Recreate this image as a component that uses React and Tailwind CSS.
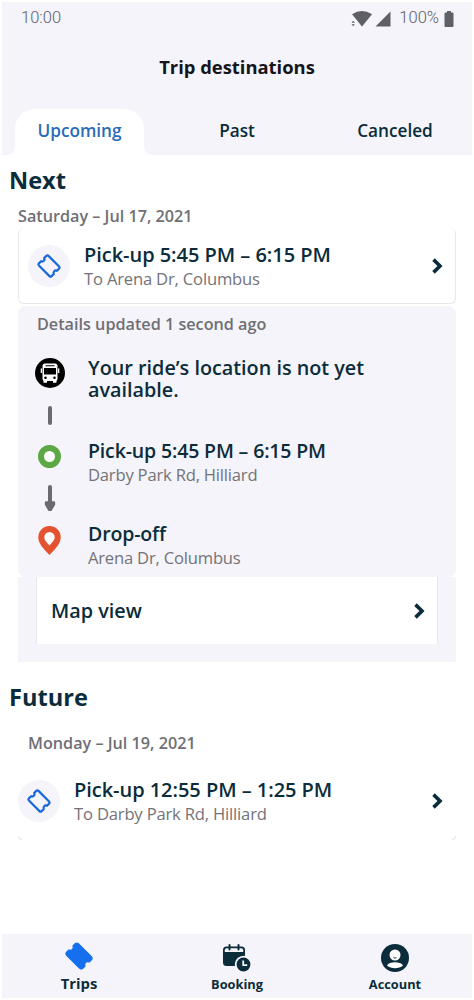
import React from "react";

const TICKET_PATH =
  "M5 5.5h14a2 2 0 0 1 2 2v2.2a2.4 2.4 0 0 0 0 4.6v2.2a2 2 0 0 1-2 2H5a2 2 0 0 1-2-2v-2.2a2.4 2.4 0 0 0 0-4.6V7.5a2 2 0 0 1 2-2z";

// wider body and shallower notches than on the filled tab icon
const TICKET_OUTLINE =
  "M4.500 5.200h15a1.500 1.500 0 0 1 1.500 1.500v3.100a2.300 2.300 0 0 0 0 4.400v3.100a1.500 1.500 0 0 1-1.500 1.500h-15A1.500 1.500 0 0 1 3 17.300v-3.100a2.300 2.300 0 0 0 0-4.400V6.700a1.500 1.500 0 0 1 1.500-1.500z";

function Chevron() {
  return (
    <svg className="w-3 h-4 shrink-0" viewBox="0 0 12 16" fill="none">
      <path d="M2.500 1.600L9 8 2.500 14.400" stroke="#0b2c3a" strokeWidth="3.600" />
    </svg>
  );
}

function TicketBadge() {
  return (
    <div className="w-[42px] h-[42px] shrink-0 rounded-full bg-[#f5f4fa] flex items-center justify-center">
      <svg
        className="w-6 h-6 rotate-45"
        viewBox="0 0 24 24"
        fill="none"
        stroke="#1868db"
        strokeWidth="2.200"
        strokeLinejoin="round"
      >
        <path d={TICKET_OUTLINE} />
      </svg>
    </div>
  );
}

function StatusBar() {
  return (
    <div className="h-[33px] flex items-center justify-between pl-[19px] pr-[18px] font-[Roboto,sans-serif] text-[16.5px] text-[#606066]">
      <span className="font-light">10:00</span>
      <div className="flex items-center">
        <svg className="w-[22px] h-4" viewBox="0 0 22 16" fill="#5f5f66">
          <path d="M1 3.2Q11 -3.2 21 3.2L11 15.5z" />
          <path d="M-.5 9h5v7h-5z" fill="#f5f4fa" />
          <path d="M.5 11.8l1.700-2 1.700 2zM.5 13.200h3.400l-1.700 2z" />
        </svg>
        <svg className="w-4 h-4 ml-[2px]" viewBox="0 0 16 16" fill="#5f5f66">
          <path d="M15.5.5v15H.5z" />
        </svg>
        <span className="ml-2 font-light">100%</span>
        <svg className="w-[10px] h-4 ml-[5px]" viewBox="0 0 10 16" fill="#5f5f66">
          <path d="M3 0h4v1.500h1.500a1 1 0 0 1 1 1V15a1 1 0 0 1-1 1h-7a1 1 0 0 1-1-1V2.500a1 1 0 0 1 1-1H3z" />
        </svg>
      </div>
    </div>
  );
}

function Tabs() {
  return (
    <div className="h-[46px] flex pl-[13px] text-[17.2px] font-semibold leading-[43px] text-center text-[#0b2c3a]">
      <div className="relative w-[129px] rounded-t-[20px] bg-white text-[#2b6cb8]">
        Upcoming
        <svg className="absolute -left-2 bottom-0 w-2 h-2" viewBox="0 0 8 8" fill="#fff">
          <path d="M8 0v8H0q7-1 8-8z" />
        </svg>
        <svg className="absolute -right-2 bottom-0 w-2 h-2" viewBox="0 0 8 8" fill="#fff">
          <path d="M0 0v8h8q-7-1-8-8z" />
        </svg>
      </div>
      <div className="w-[186px]">Past</div>
      <div className="w-[130px]">Canceled</div>
    </div>
  );
}

function TripRow({ title, subtitle }) {
  return (
    <>
      <TicketBadge />
      <div className="ml-[14px] pt-[3px] grow">
        <div className="text-[20px] leading-6 tracking-[-0.04px] font-semibold text-[#0b2c3a]">{title}</div>
        <div className="text-[16.6px] leading-6 tracking-[-0.18px] text-[#737378]">{subtitle}</div>
      </div>
      <Chevron />
    </>
  );
}

function BusIcon() {
  return (
    <svg className="w-[30px] h-[30px]" viewBox="0 0 30 30">
      <circle cx="15" cy="15" r="15" fill="#000" />
      <rect x="7.5" y="5.5" width="15" height="17.500" rx="2.500" fill="#fff" />
      <path d="M8.500 22h3.500v2.800H8.500zM18 22h3.500v2.800H18zM5.700 10.500h1.300v4.500H5.700zM23 10.500h1.300v4.500H23z" fill="#fff" />
      <path d="M10.500 7.200h9v1h-9zM9 10h12v6.500H9z" fill="#000" />
      <circle cx="10.500" cy="19.700" r="1.300" />
      <circle cx="19.500" cy="19.700" r="1.300" />
    </svg>
  );
}

function Timeline() {
  return (
    <div className="w-[31px] flex flex-col items-center">
      <BusIcon />
      <div className="mt-[18px] w-1 h-[19px] rounded-full bg-[#6b6a72]" />
      <div className="mt-5 w-[23px] h-[23px] rounded-full border-[6px] border-[#5da845] bg-white" />
      <svg className="mt-[17px] w-3 h-[27px]" viewBox="0 0 12 27" fill="#6b6a72">
        <rect x="4" y="0" width="4" height="20" rx="2" />
        <path
          d="M2 17.5h8v1.800L6.800 24.800H5.200L2 19.300z"
          stroke="#6b6a72"
          strokeWidth="2.400"
          strokeLinejoin="round"
        />
      </svg>
      <svg className="mt-[14px] w-[23px] h-[29px]" viewBox="0 0 23 29">
        <path
          d="M11.500 0A11.200 11.200 0 0 0 .3 11.200C.3 17.500 5 22 11.500 29 18 22 22.700 17.500 22.700 11.200A11.200 11.200 0 0 0 11.500 0z"
          fill="#e4532f"
        />
        <path
          d="M11.500 6a5.200 5.200 0 0 0-5.200 5.200c0 3 3 5.300 5.200 8.300 2.200-3 5.200-5.300 5.200-8.300A5.200 5.200 0 0 0 11.500 6z"
          fill="#fff"
        />
      </svg>
    </div>
  );
}

function Step({ title, subtitle }) {
  return (
    <div className="text-[16.6px] leading-6 tracking-[-0.2px] text-[#737378]">
      <div className="text-[19.5px] tracking-[-0.15px] font-semibold text-[#0b2c3a]">{title}</div>
      {subtitle}
    </div>
  );
}

function CalendarClock() {
  return (
    <svg className="w-7 h-7" viewBox="0 0 28 28" fill="none">
      <rect x="0" y="2.500" width="22" height="19.500" rx="3.500" fill="#0b2c3a" />
      <path d="M1.800 8V6.300q0-2 2-2h14.400q2 0 2 2V8z" fill="#f5f4fa" />
      <path d="M6.500 1v4.500M15.500 1v4.500" stroke="#0b2c3a" strokeWidth="2" strokeLinecap="round" />
      <circle cx="20.500" cy="20.500" r="7.800" fill="#0b2c3a" stroke="#f5f4fa" strokeWidth="1.800" />
      <path d="M20.200 16.500v4.700h4" stroke="#fff" strokeWidth="1.700" />
    </svg>
  );
}

function AccountIcon() {
  return (
    <svg className="w-7 h-7" viewBox="0 0 28 28">
      <circle cx="14" cy="14" r="14" fill="#0b2c3a" />
      <circle cx="14" cy="11" r="5.500" fill="#fff" />
      <path d="M6 21.500C8 17.300 20 17.300 22 21.500 18 25.200 10 25.200 6 21.500z" fill="#fff" />
      <path d="M11.800 13.500h4.400q-2.200 2.200-4.400 0z" fill="#0b2c3a" />
    </svg>
  );
}

function BottomNav() {
  return (
    <nav className="mt-auto mb-[2px] mx-[2px] h-[64px] flex bg-[#f5f4fa] text-[#0b2c3a] font-bold text-[12.8px]">
      <div className="w-[154px] flex flex-col items-center pt-2">
        <svg className="w-7 h-7 rotate-45" viewBox="1 1 22 22" fill="#1670ee">
          <path d={TICKET_PATH} stroke="#1670ee" strokeLinejoin="round" />
        </svg>
        <span className="text-[14.8px] leading-[26px]">Trips</span>
      </div>
      <div className="w-[162px] flex flex-col items-center pt-[10px]">
        <CalendarClock />
        <span className="leading-6">Booking</span>
      </div>
      <div className="w-[154px] flex flex-col items-center pt-[10px]">
        <AccountIcon />
        <span className="leading-6">Account</span>
      </div>
    </nav>
  );
}

export default function App() {
  return (
    <div className="w-[474px] h-[1000px] flex flex-col overflow-hidden bg-white font-['Open_Sans','Noto_Sans',sans-serif]">
      <header className="mt-[2px] mx-[2px] h-[153px] bg-[#f5f4fa] flex flex-col">
        <StatusBar />
        <h1 className="h-[74px] pt-[18px] text-center text-[18.4px] leading-7 font-bold text-[#15151b]">
          Trip destinations
        </h1>
        <Tabs />
      </header>

      <section>
        <h2 className="h-[49px] pl-[9px] pt-[7px] text-[23.6px] leading-9 font-bold text-[#0b2c3a]">Next</h2>
        <p className="h-6 pl-[18px] text-[16.2px] leading-6 font-semibold text-[#6f6f74]">
          Saturday – Jul 17, 2021
        </p>
        <div className="mx-[18px] h-[76px] flex items-center rounded-md border border-t-0 border-[#e8e7ec] pl-[9px] pr-3">
          <TripRow title="Pick-up 5:45 PM – 6:15 PM" subtitle="To Arena Dr, Columbus" />
        </div>
        <div className="mx-[18px] mt-[2px] h-[271px] rounded-lg bg-[#f5f4fa]">
          <p className="pl-[19px] pt-[6px] h-[52px] text-[16.2px] leading-6 font-semibold text-[#6f6f74]">
            Details updated 1 second ago
          </p>
          <div className="flex pl-4">
            <Timeline />
            <div className="ml-[23px]">
              <div className="h-[82px] w-[300px] -mt-px text-[19.8px] leading-[22px] font-semibold text-[#0b2c3a]">
                Your ride’s location is not yet available.
              </div>
              <div className="h-[83px]">
                <Step title="Pick-up 5:45 PM – 6:15 PM" subtitle="Darby Park Rd, Hilliard" />
              </div>
              <Step title="Drop-off" subtitle="Arena Dr, Columbus" />
            </div>
          </div>
        </div>
        <div className="mx-[18px] h-[85px] bg-[#f5f4fa] px-[18px]">
          <div className="h-[67px] flex items-center justify-between border-x border-[#e8e7ec] bg-white pl-[14px] pr-3 text-[19.8px] font-semibold text-[#0b2c3a]">
            Map view
            <Chevron />
          </div>
        </div>
      </section>

      <section>
        <h2 className="h-[69px] pl-[9px] pt-[17px] text-[23.6px] leading-9 font-bold text-[#0b2c3a]">Future</h2>
        <p className="h-8 pl-7 text-[16.2px] leading-6 font-semibold text-[#6f6f74]">
          Monday – Jul 19, 2021
        </p>
        <div className="relative mx-[18px] h-[77px] pb-[2px] flex items-center pr-[13px]">
          <TripRow title="Pick-up 12:55 PM – 1:25 PM" subtitle="To Darby Park Rd, Hilliard" />
          <svg className="absolute left-0 bottom-0 w-1 h-1" viewBox="0 0 4 4" fill="none">
            <path d="M0 0q.5 3 4 3.500" stroke="#dedde2" />
          </svg>
          <svg className="absolute right-0 bottom-0 w-1 h-1" viewBox="0 0 4 4" fill="none">
            <path d="M4 0q-.5 3-4 3.500" stroke="#dedde2" />
          </svg>
        </div>
      </section>

      <BottomNav />
    </div>
  );
}
